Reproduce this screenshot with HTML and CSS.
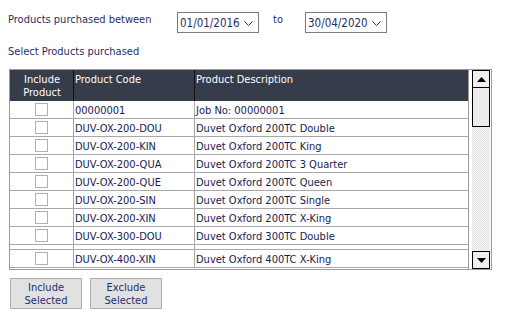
FILE: index.html
```html
<!DOCTYPE html>
<html lang="en">
<head>
    <meta charset="UTF-8">
    <title>Products purchased</title>
    <link rel="stylesheet" href="styles.css">
</head>
<body>
    <div class="filter-row">
        <span class="label">Products purchased between</span>
        <div class="combo">
            <span>01/01/2016</span>
            <svg class="chev" width="9" height="5" viewBox="0 0 9 5"><polyline points="0.5,0.5 4.5,4.5 8.5,0.5" fill="none" stroke="#333" stroke-width="1"/></svg>
        </div>
        <span class="label to">to</span>
        <div class="combo">
            <span>30/04/2020</span>
            <svg class="chev" width="9" height="5" viewBox="0 0 9 5"><polyline points="0.5,0.5 4.5,4.5 8.5,0.5" fill="none" stroke="#333" stroke-width="1"/></svg>
        </div>
    </div>

    <div class="label select-label">Select Products purchased</div>

    <div class="grid">
        <div class="table">
            <div class="head">
                <div class="hcell center">Include<br>Product</div>
                <div class="hcell">Product Code</div>
                <div class="hcell last">Product Description</div>
            </div>
            <div class="row"><div class="cell center"><span class="check"></span></div><div class="cell">00000001</div><div class="cell last">Job No: 00000001</div></div>
            <div class="row"><div class="cell center"><span class="check"></span></div><div class="cell">DUV-OX-200-DOU</div><div class="cell last">Duvet Oxford 200TC Double</div></div>
            <div class="row"><div class="cell center"><span class="check"></span></div><div class="cell">DUV-OX-200-KIN</div><div class="cell last">Duvet Oxford 200TC King</div></div>
            <div class="row"><div class="cell center"><span class="check"></span></div><div class="cell">DUV-OX-200-QUA</div><div class="cell last">Duvet Oxford 200TC 3 Quarter</div></div>
            <div class="row"><div class="cell center"><span class="check"></span></div><div class="cell">DUV-OX-200-QUE</div><div class="cell last">Duvet Oxford 200TC Queen</div></div>
            <div class="row"><div class="cell center"><span class="check"></span></div><div class="cell">DUV-OX-200-SIN</div><div class="cell last">Duvet Oxford 200TC Single</div></div>
            <div class="row"><div class="cell center"><span class="check"></span></div><div class="cell">DUV-OX-200-XIN</div><div class="cell last">Duvet Oxford 200TC X-King</div></div>
            <div class="row"><div class="cell center"><span class="check"></span></div><div class="cell">DUV-OX-300-DOU</div><div class="cell last">Duvet Oxford 300TC Double</div></div>
            <div class="row partial"><div class="cell center"></div><div class="cell"></div><div class="cell last"></div></div>
            <div class="row"><div class="cell center"><span class="check"></span></div><div class="cell">DUV-OX-400-XIN</div><div class="cell last">Duvet Oxford 400TC X-King</div></div>
        </div>
        <div class="scrollbar">
            <div class="sbtn"><svg width="9" height="5" viewBox="0 0 9 5"><polygon points="0,5 9,5 4.5,0" fill="#000"/></svg></div>
            <div class="thumb"></div>
            <div class="track"></div>
            <div class="sbtn"><svg width="9" height="5" viewBox="0 0 9 5"><polygon points="0,0 9,0 4.5,5" fill="#000"/></svg></div>
        </div>
    </div>

    <div class="buttons">
        <button class="btn">Include<br>Selected</button>
        <button class="btn">Exclude<br>Selected</button>
    </div>
</body>
</html>
```

FILE: styles.css
```css
* { margin: 0; padding: 0; box-sizing: border-box; }
body {
    font-family: 'DejaVu Sans Condensed', 'DejaVu Sans', sans-serif;
    font-size: 11px;
    color: #1a1a50;
    background: #fff;
    width: 506px;
    height: 320px;
    overflow: hidden;
}
.label { color: #1f2f63; }
.filter-row {
    display: flex;
    align-items: center;
    height: 21px;
    margin: 12px 0 0 8px;
}
.filter-row .label:first-child { width: 169px; margin-top: -6px; }
.combo {
    width: 82px; height: 21px;
    border: 1px solid #7a7a7a;
    display: flex; align-items: center;
    justify-content: space-between;
    padding: 0 5px 0 2px;
    font-size: 11.5px;
    color: #1f2f63;
}
.chev { margin-top: 1px; }
.to { width: 46px; padding-left: 14px; margin-top: -6px; }
.select-label { margin: 10px 0 0 8px; height: 14px; padding-top: 2px; }

.grid {
    display: flex;
    width: 483px; height: 201px;
    margin: 12px 0 0 9px;
    border: 1px solid #9c9c9c;
}
.table { width: 459px; border-right: 1px solid #9c9c9c; overflow: hidden; }
.head {
    display: grid;
    grid-template-columns: 64px 121px 1fr;
    height: 31px;
    background: #363c4a;
    color: #fff;
}
.hcell {
    border-right: 1px solid #111;
    padding: 3px 0 0 1px;
    line-height: 13px;
}
.hcell.center { text-align: center; padding-top: 3px; }
.hcell.last { border-right: none; }
.row {
    display: grid;
    grid-template-columns: 64px 121px 1fr;
    height: 18px;
}
.row.partial { height: 5px; }
.cell {
    border-right: 1px solid #a8a8a8;
    border-bottom: 1px solid #a8a8a8;
    padding: 3px 0 0 1px;
    line-height: 14px;
    white-space: nowrap;
    overflow: hidden;
}
.cell.center { display: flex; justify-content: center; padding: 2px 0 0 0; }
.cell.last { border-right: none; }
.check {
    width: 13px; height: 13px;
    border: 1px solid #b0b0b0;
    background: #fff;
}

.scrollbar {
    width: 18px;
    margin-left: 3px;
    display: flex;
    flex-direction: column;
}
.sbtn {
    height: 18px;
    border: 1px solid #000;
    background: #f0f0f0;
    display: flex; align-items: center; justify-content: center;
}
.thumb {
    height: 39px;
    border: 1px solid #000;
    border-top: none;
    background: #ececec;
}
.track {
    flex: 1;
    background: repeating-conic-gradient(#dcdcdc 0 25%, #fff 0 50%) 0 0 / 2px 2px;
}

.buttons {
    display: flex;
    gap: 8px;
    margin: 8px 0 0 10px;
}
.btn {
    width: 72px; height: 31px;
    background: #e1e1e1;
    border: 1px solid #adadad;
    font-family: inherit;
    font-size: 11px;
    color: #1f2f63;
    line-height: 13px;
}
```
